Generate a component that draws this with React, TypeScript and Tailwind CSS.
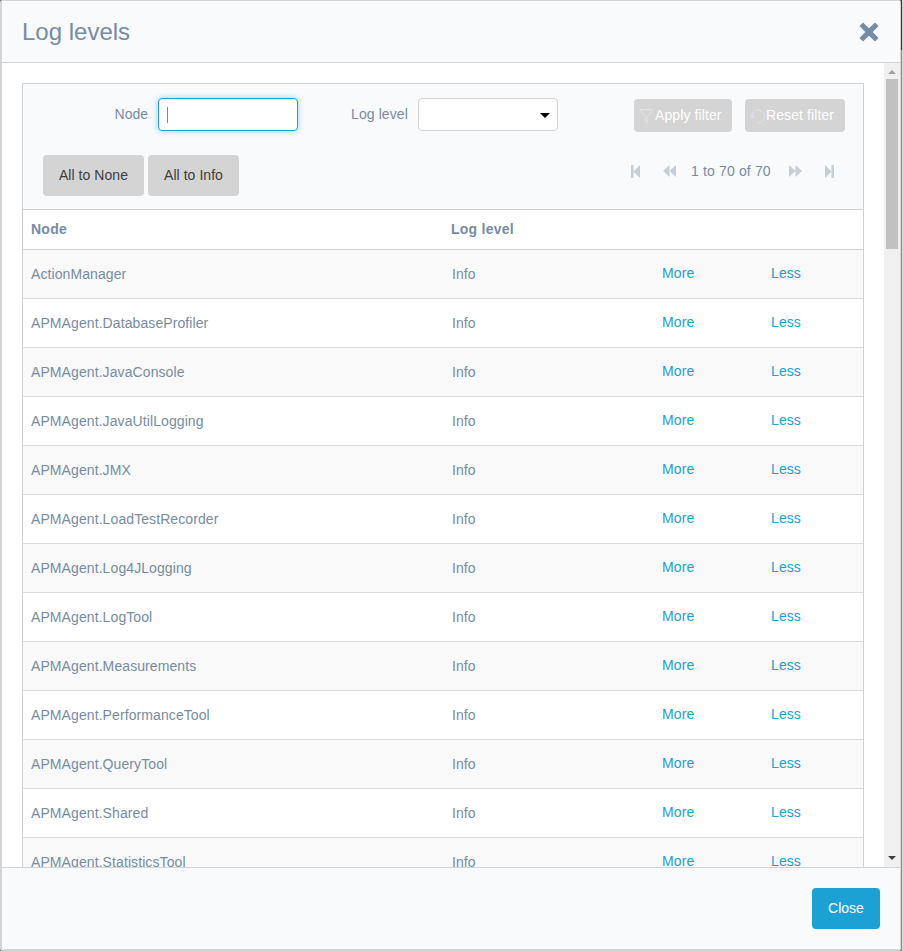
import React from "react";

const nodes = [
  "ActionManager",
  "APMAgent.DatabaseProfiler",
  "APMAgent.JavaConsole",
  "APMAgent.JavaUtilLogging",
  "APMAgent.JMX",
  "APMAgent.LoadTestRecorder",
  "APMAgent.Log4JLogging",
  "APMAgent.LogTool",
  "APMAgent.Measurements",
  "APMAgent.PerformanceTool",
  "APMAgent.QueryTool",
  "APMAgent.Shared",
  "APMAgent.StatisticsTool",
];

function Pager() {
  return (
    <div className="flex h-[14px] items-center text-[#c6cfd6]">
      <svg width="9" height="13" viewBox="0 0 9 13" fill="currentColor"><path d="M0 0h2.500v13H0zM9 0v13L2.500 6.500z" /></svg>
      <svg className="ml-[23px]" width="13" height="12" viewBox="0 0 13 12" fill="currentColor"><path d="M6.500 0v12L0 6zM13 0v12L6.500 6z" /></svg>
      <span className="ml-[15px] w-[81px] whitespace-nowrap text-[14px] leading-[20px] tracking-[0.15px] text-[#778ca2]">1 to 70 of 70</span>
      <svg className="ml-[17px]" width="13" height="12" viewBox="0 0 13 12" fill="currentColor"><path d="M0 0v12l6.500-6zM6.500 0v12L13 6z" /></svg>
      <svg className="ml-[23px]" width="9" height="13" viewBox="0 0 9 13" fill="currentColor"><path d="M6.500 0H9v13H6.500zM0 0v13l6.500-6.500z" /></svg>
    </div>
  );
}

function Scrollbar() {
  return (
    <div className="flex w-4 shrink-0 flex-col items-center bg-[#f0f0f0]">
      <div className="flex h-4 items-center pt-[2px]">
        <svg width="8" height="4" viewBox="0 0 8 4"><path d="M4 0l4 4H0z" fill="#a0a0a0" /></svg>
      </div>
      <div className="h-[170px] w-3 bg-[#c1c1c1]" />
      <div className="mt-auto flex h-4 items-center pb-[2px]">
        <svg width="8" height="4" viewBox="0 0 8 4"><path d="M4 4l4-4H0z" fill="#404040" /></svg>
      </div>
    </div>
  );
}

export default function App() {
  return (
    <div className="flex h-[951px] w-[903px] overflow-hidden bg-[#3a4249] font-['Liberation_Sans',Arial,sans-serif] text-[14px] text-[#778ca2]">
      <div className="flex w-[901px] shrink-0 flex-col overflow-hidden rounded-[2px] border border-b-2 border-l-2 border-[#d4d4d4] bg-white">
        <header className="flex h-[62px] shrink-0 items-center justify-between border-b border-[#d1d5d7] bg-[#f9fafc] pl-5 pr-[21px]">
          <h1 className="text-[24px] leading-[30px]">Log levels</h1>
          <svg className="mt-px" width="20" height="20" viewBox="0 0 20 20"><path d="M4 0.500L10 6.300 16 0.500 19.500 4 13.700 10 19.500 16 16 19.500 10 13.700 4 19.500 0.500 16 6.300 10 0.500 4z" fill="#778ca2" /></svg>
        </header>
        <main className="flex min-h-0 flex-1 overflow-hidden">
          <div className="w-[882px] shrink-0 overflow-hidden pl-5 pr-5 pt-5">
            <section className="border border-[#ced0d2]">
              <div className="h-[125px] bg-[#f9fafc] px-5 pt-[14px]">
                <div className="-mr-2 flex h-[34px] items-start">
                  <label className="w-[105px] shrink-0 pt-[6px] text-right leading-[20px]">Node</label>
                  <div className="ml-[10px] flex h-[33px] w-[140px] shrink-0 items-center rounded-[4px] border border-[#1ba1d4] bg-white pl-2 shadow-[0_0_6px_rgba(27,161,212,0.45)]">
                    <span className="h-4 w-px bg-[#778ca2]" />
                  </div>
                  <label className="ml-[53px] w-[57px] shrink-0 whitespace-nowrap pt-[6px] leading-[20px] tracking-[0.1px]">Log level</label>
                  <div className="ml-[10px] flex h-[33px] w-[140px] shrink-0 items-center justify-end rounded-[4px] border border-[#d4d4d4] bg-white pr-[7px] pt-[2px]">
                    <svg width="10" height="5" viewBox="0 0 10 5"><path d="M0 0h10L5 5z" fill="#000" /></svg>
                  </div>
                  <button className="ml-[76px] mt-px flex h-[33px] w-[98px] shrink-0 items-center whitespace-nowrap rounded-[4px] bg-[#d4d4d4] pl-[5px] tracking-[0.1px] text-white">
                    <svg className="mt-px shrink-0" width="15" height="15" viewBox="0 0 15 15" fill="none" stroke="#e8e8e8" strokeWidth="0.8"><path d="M.7.7h13.200L8.200 7.600v6.600L6.300 12.400V7.600z" /></svg>
                    <span className="ml-px">Apply filter</span>
                  </button>
                  <button className="ml-[13px] mt-px flex h-[33px] w-[100px] shrink-0 items-center whitespace-nowrap rounded-[4px] bg-[#d4d4d4] pl-[5px] tracking-[0.1px] text-white">
                    <svg className="mt-px shrink-0" width="15" height="15" viewBox="0 0 15 15" fill="none" stroke="#e8e8e8" strokeWidth="0.800"><path d="M2.100 8.500C1.600 4 4.500.9 8 .9c3.600 0 6.300 2.900 6.300 6.500 0 3.700-2.700 6.500-6.300 6.500M.3 6.200l1.900 2.400 2.500-1.800" /></svg>
                    <span className="ml-px">Reset filter</span>
                  </button>
                </div>
                <div className="mt-[23px] flex justify-between">
                  <div className="flex gap-1 text-[#3c3c3c]">
                    <button className="h-[41px] w-[101px] rounded-[4px] bg-[#d4d4d4] tracking-[0.05px]">All to None</button>
                    <button className="h-[41px] w-[91px] rounded-[4px] bg-[#d4d4d4] tracking-[0.05px]">All to Info</button>
                  </div>
                  <div className="pr-[9px] pt-[9px]"><Pager /></div>
                </div>
              </div>
              <table className="w-full table-fixed border-collapse text-left">
                <colgroup><col className="w-[420px]" /><col className="w-[211px]" /><col className="w-[109px]" /><col /></colgroup>
                <thead>
                  <tr className="h-[40px] border-y border-[#ced0d2] tracking-[0.25px]">
                    <th className="px-2">Node</th><th className="px-2">Log level</th><th /><th />
                  </tr>
                </thead>
                <tbody>
                  {nodes.map((n) => (
                    <tr key={n} className="h-[49px] border-b border-[#d9dcde] tracking-[0.09px] odd:bg-[#f9f9f9]">
                      <td className="px-2">{n}</td>
                      <td className="px-[9px]">Info</td>
                      <td className="px-2 pb-[2px] text-[#1ba1d4]">More</td>
                      <td className="px-2 pb-[2px] text-[#1ba1d4]">Less</td>
                    </tr>
                  ))}
                </tbody>
              </table>
            </section>
          </div>
          <Scrollbar />
        </main>
        <footer className="flex h-[82px] shrink-0 items-start justify-end border-t border-[#d1d5d7] bg-[#f9fafc] pr-5 pt-5">
          <button className="h-[41px] w-[68px] rounded-[4px] bg-[#1ba1d4] text-white">Close</button>
        </footer>
      </div>
      <div className="flex w-px flex-col">
        <div className="h-[50px] bg-[#2b3640]" />
        <div className="flex-1 bg-[#929292]" />
      </div>
      <div className="w-px bg-[#d4d4d4]" />
    </div>
  );
}
